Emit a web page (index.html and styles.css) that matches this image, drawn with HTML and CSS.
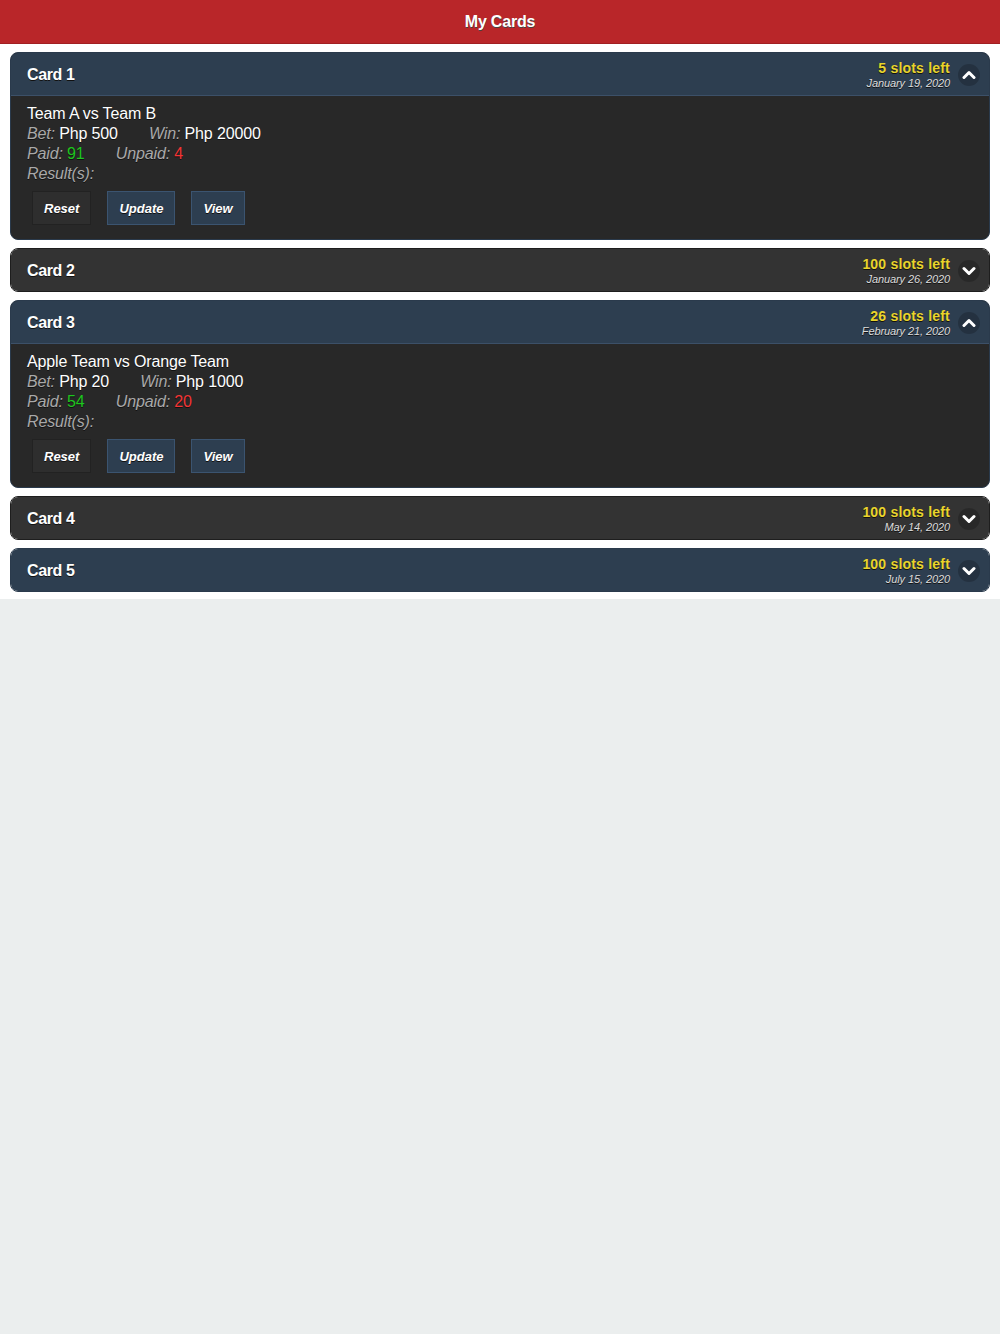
FILE: index.html
```html
<!DOCTYPE html>
<html lang="en">
<head>
    <meta charset="UTF-8">
    <meta name="viewport" content="width=device-width, initial-scale=1.0">
    <title>My Cards</title>
    <link rel="stylesheet" href="styles.css">
</head>
<body>
    <header class="topbar"><h1>My Cards</h1></header>

    <div class="content">
        <div class="card card-blue">
            <div class="card-head">
                <span class="card-name">Card 1</span>
                <div class="card-meta">
                    <span class="slots">5 slots left</span>
                    <span class="date">January 19, 2020</span>
                </div>
                <span class="toggle">
                    <svg width="14" height="10" viewBox="0 0 14 10"><path d="M2 7.5 L7 2.5 L12 7.5" fill="none" stroke="#fff" stroke-width="3" stroke-linecap="round" stroke-linejoin="round"/></svg>
                </span>
            </div>
            <div class="card-body">
                <div class="match">Team A vs Team B</div>
                <div class="line">
                    <span class="item"><i>Bet:</i> Php 500</span>
                    <span class="item"><i>Win:</i> Php 20000</span>
                </div>
                <div class="line">
                    <span class="item"><i>Paid:</i> <span class="paid">91</span></span>
                    <span class="item"><i>Unpaid:</i> <span class="unpaid">4</span></span>
                </div>
                <div class="line"><i>Result(s):</i></div>
                <div class="actions">
                    <button class="btn btn-dark">Reset</button>
                    <button class="btn">Update</button>
                    <button class="btn">View</button>
                </div>
            </div>
        </div>

        <div class="card">
            <div class="card-head">
                <span class="card-name">Card 2</span>
                <div class="card-meta">
                    <span class="slots">100 slots left</span>
                    <span class="date">January 26, 2020</span>
                </div>
                <span class="toggle">
                    <svg width="14" height="10" viewBox="0 0 14 10"><path d="M2 2.5 L7 7.5 L12 2.5" fill="none" stroke="#fff" stroke-width="3" stroke-linecap="round" stroke-linejoin="round"/></svg>
                </span>
            </div>
        </div>

        <div class="card card-blue">
            <div class="card-head">
                <span class="card-name">Card 3</span>
                <div class="card-meta">
                    <span class="slots">26 slots left</span>
                    <span class="date">February 21, 2020</span>
                </div>
                <span class="toggle">
                    <svg width="14" height="10" viewBox="0 0 14 10"><path d="M2 7.5 L7 2.5 L12 7.5" fill="none" stroke="#fff" stroke-width="3" stroke-linecap="round" stroke-linejoin="round"/></svg>
                </span>
            </div>
            <div class="card-body">
                <div class="match">Apple Team vs Orange Team</div>
                <div class="line">
                    <span class="item"><i>Bet:</i> Php 20</span>
                    <span class="item"><i>Win:</i> Php 1000</span>
                </div>
                <div class="line">
                    <span class="item"><i>Paid:</i> <span class="paid">54</span></span>
                    <span class="item"><i>Unpaid:</i> <span class="unpaid">20</span></span>
                </div>
                <div class="line"><i>Result(s):</i></div>
                <div class="actions">
                    <button class="btn btn-dark">Reset</button>
                    <button class="btn">Update</button>
                    <button class="btn">View</button>
                </div>
            </div>
        </div>

        <div class="card">
            <div class="card-head">
                <span class="card-name">Card 4</span>
                <div class="card-meta">
                    <span class="slots">100 slots left</span>
                    <span class="date">May 14, 2020</span>
                </div>
                <span class="toggle">
                    <svg width="14" height="10" viewBox="0 0 14 10"><path d="M2 2.5 L7 7.5 L12 2.5" fill="none" stroke="#fff" stroke-width="3" stroke-linecap="round" stroke-linejoin="round"/></svg>
                </span>
            </div>
        </div>

        <div class="card card-blue">
            <div class="card-head">
                <span class="card-name">Card 5</span>
                <div class="card-meta">
                    <span class="slots">100 slots left</span>
                    <span class="date">July 15, 2020</span>
                </div>
                <span class="toggle">
                    <svg width="14" height="10" viewBox="0 0 14 10"><path d="M2 2.5 L7 7.5 L12 2.5" fill="none" stroke="#fff" stroke-width="3" stroke-linecap="round" stroke-linejoin="round"/></svg>
                </span>
            </div>
        </div>
    </div>
</body>
</html>
```

FILE: styles.css
```css
/* General page */
body {
    margin: 0;
    padding: 0;
    font-family: "Liberation Sans", Arial, sans-serif;
    background-color: #ebeeee;
    color: #ffffff;
}

/* Top bar */
.topbar {
    height: 44px;
    padding-top: 1px;
    background-color: #b92629;
    border-bottom: 1px solid #a11f22;
    box-sizing: border-box;
    display: flex;
    align-items: center;
    justify-content: center;
}

.topbar h1 {
    margin: 0;
    font-size: 16px;
    font-weight: bold;
    letter-spacing: -0.2px;
    text-shadow: 0 1px 0 #444;
}

/* Content area */
.content {
    background-color: #ffffff;
    padding: 8px 10px 7px;
}

/* Cards */
.card {
    margin-bottom: 8px;
    border: 1px solid #1e1e1e;
    border-radius: 8px;
    overflow: hidden;
    background-color: #282828;
}

.card:last-child {
    margin-bottom: 0;
}

.card-head {
    height: 41px;
    display: flex;
    align-items: center;
    padding: 1px 9px 0 16px;
    background-color: #333333;
    text-shadow: 0 1px 0 #111;
}

.card-blue {
    border-color: #2a3a4c;
}

.card-blue .card-head {
    background-color: #2d3e50;
}

.card-name {
    flex: 1;
    font-size: 16px;
    font-weight: bold;
    letter-spacing: -0.4px;
}

.card-meta {
    display: flex;
    flex-direction: column;
    align-items: flex-end;
    margin-right: 8px;
}

.slots {
    color: #e9d42b;
    font-size: 14px;
    font-weight: bold;
    line-height: 16px;
    letter-spacing: 0.2px;
}

.date {
    color: #dddddd;
    font-size: 11px;
    font-style: italic;
    line-height: 14px;
    letter-spacing: -0.1px;
}

.toggle {
    width: 22px;
    height: 22px;
    border-radius: 50%;
    background-color: rgba(0, 0, 0, 0.2);
    display: flex;
    align-items: center;
    justify-content: center;
}

/* Card body */
.card-body {
    border-top: 1px solid #3c5068;
    padding: 8px 16px 14px;
    font-size: 16px;
    line-height: 20px;
    letter-spacing: -0.15px;
    text-shadow: 0 1px 0 #111;
}

.card-body i {
    color: #a9a9a9;
}

.item {
    display: inline-block;
    margin-right: 27px;
}

.paid {
    color: #1fc41f;
}

.unpaid {
    color: #f23535;
}

/* Buttons */
.actions {
    display: flex;
    gap: 16px;
    margin-top: 7px;
    padding-left: 5px;
}

.btn {
    height: 34px;
    padding: 0 11px;
    border: 1px solid #3b5470;
    background-color: #2d3e50;
    color: #ffffff;
    font-family: inherit;
    font-size: 13px;
    font-weight: bold;
    font-style: italic;
    letter-spacing: 0;
    text-shadow: 0 1px 0 #111;
    cursor: pointer;
}

.btn-dark {
    border-color: #222222;
    background-color: #2e2e2e;
}
```
